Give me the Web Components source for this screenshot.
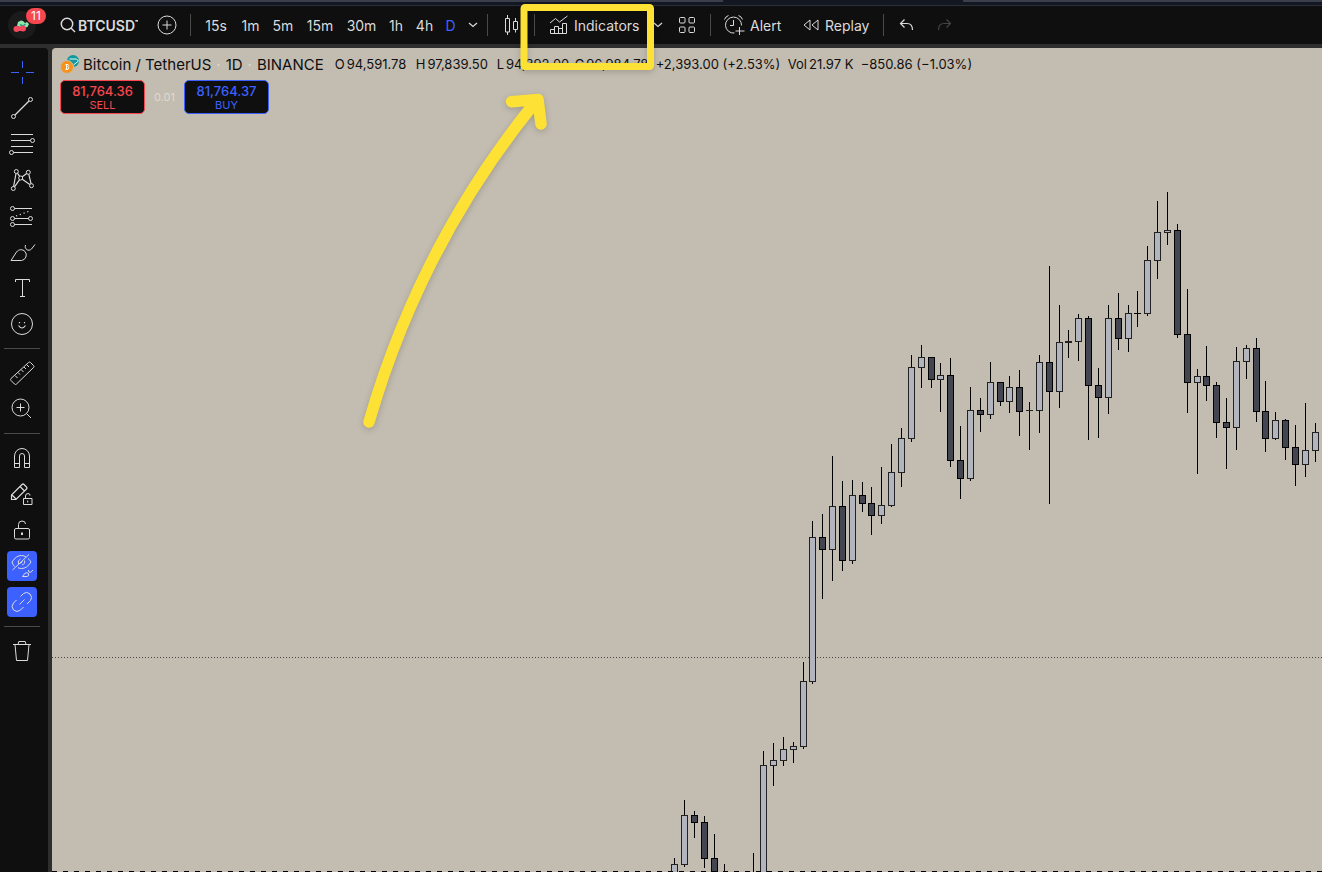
<!DOCTYPE html>
<html lang="en">
<head>
<meta charset="utf-8">
<title>BTCUSDT chart</title>
<style>
  html, body { margin: 0; height: 100%; background: #2e2e2e; }
  body { font-family: Inter, "Liberation Sans", sans-serif; font-size: 14px; color: #dbdbdb; overflow: hidden; }
</style>
</head>
<body>
<trading-app></trading-app>

<script>
const ICONS = {
  search: [16, 16, '<circle cx="7" cy="7" r="5.7" stroke-width="1.5"/><path d="M11 11l4 4" stroke-width="1.5"/>'],
  plus: [20, 20, '<circle cx="10" cy="10" r="9"/><path d="M10 5.5v9M5.5 10h9"/>'],
  chevron: [10, 6, '<path d="M1 1l4 3.500 4-3.500" stroke-width="1.200"/>'],
  candles: [16, 22, '<path d="M4.500 1v3M4.500 18v3M2.500 4.500h4v13.500h-4zM12.500 4v3.500M12.500 15.500v3M10.500 7.500h4v8h-4z"/>'],
  indicators: [20, 20, '<path d="M1.500 18.500v-4h4v4zM5.500 18.500v-7h4v7M9.500 18.500v-5h4v5M13.500 18.500V8.500h4v10zM5 18.500h10M1 8l5.500-4.500 4 3.500L18.500 1"/>'],
  layout: [18, 18, '<rect x="1.500" y="1.500" width="5.500" height="5.500" rx="1"/><rect x="11" y="1.500" width="5.500" height="5.500" rx="1"/><rect x="1.500" y="11" width="5.500" height="5.500" rx="1"/><rect x="11" y="11" width="5.500" height="5.500" rx="1"/>'],
  alarm: [22, 22, '<path d="M18.500 11.500a8 8 0 1 0-7 7.500M10.500 6v5.500H7M1.500 5.500Q2.500 2.500 5.500 1.500M15.500 1.500Q18.500 2.500 19.500 5.500M16.500 13v8M12.500 17h9"/>'],
  replay: [18, 14, '<path d="M8 2v10L2 7zM16 2v10L10 7z"/>'],
  undo: [16, 14, '<path d="M6.500 1.500L2.500 5.500l4 4M2.500 5.500H9q5.500 0 5.500 6.500" stroke-width="1.200"/>'],
  redo: [16, 14, '<path d="M10.500 1.500l4 4-4 4M14.500 5.500H8q-5.500 0-5.500 6.500" stroke-width="1.200"/>'],
  cross: [28, 28, '<path d="M14.500 3v7M14.500 19v7M3 14.500h8M18 14.500h8"/>'],
  trend: [28, 28, '<circle cx="5.500" cy="22.500" r="2"/><circle cx="22.500" cy="5.500" r="2"/><path d="M7 21L21 7" stroke-width="1.200"/>'],
  fib: [28, 28, '<path d="M3 4.500h22M3 10.500h19.500M3 16.500h22M5.500 22.500H25"/><circle cx="24.500" cy="10.500" r="2"/><circle cx="3.500" cy="22.500" r="2"/>'],
  pattern: [28, 28, '<circle cx="5.300" cy="22.500" r="2"/><circle cx="8.300" cy="5.500" r="2"/><circle cx="12.700" cy="12" r="2"/><circle cx="20.300" cy="6.300" r="2"/><circle cx="23.500" cy="19.700" r="2"/><path d="M5.600 20.500L8 7.500M9.400 7.100l2.200 3.300M14.300 10.800l4.400-3.300M20.800 8.300l2.300 9.500M14.300 13.200l7.500 5.400M11.600 13.700L6.500 20.900" stroke-width="1.200"/>'],
  position: [28, 28, '<circle cx="4.500" cy="6.500" r="2"/><path d="M6.500 6.500H24"/><circle cx="4.500" cy="16.500" r="2"/><path d="M6.500 16.500h14"/><circle cx="22.500" cy="16.500" r="2"/><circle cx="4.500" cy="22.500" r="2"/><path d="M6.500 22.500H24"/><path d="M8 14l15-5.500" stroke-width="1.200" stroke-dasharray="1.200 2.800"/>'],
  brush: [28, 28, '<path d="M3 22.500h10.500a5.500 5.500 0 0 0 3.500-9c-2.500-2.500-6-2.500-8.500.5zM17.500 7c-1.500 4 3 7 6 4L27 6.500"/>'],
  text: [28, 28, '<path d="M7.500 8V5.500h14V8M14.500 5.500v17M12 22.500h5"/>'],
  smile: [28, 28, '<circle cx="14" cy="14" r="10.500"/><path d="M10.500 15.500q3.500 5 7 0M11.500 12v1.300M16.500 12v1.300" stroke-width="1.200"/>'],
  ruler: [28, 28, '<path d="M20.500 3.500q1-1 2 0l3 3q1 1 0 2l-17 16.500q-1 1-2 0l-3.500-3.500q-1-1 0-2zM7 16.500l2.500 2.500M10 13.500l2 2M13 10.500l2.500 2.500M16 8l2 2M18.500 5.500L21 8"/>'],
  zoom: [28, 28, '<circle cx="12.500" cy="12.500" r="8.500"/><path d="M18.500 18.500l4.500 4.500M12.500 8.500v8M8.500 12.500h8"/>'],
  magnet: [28, 28, '<path d="M6.500 23.500V12a7.500 7.500 0 0 1 15 0v11.500h-5V12a2.500 2.500 0 0 0-5 0v11.500zM6.500 19.500h5M16.500 19.500h5"/>'],
  pencil: [28, 28, '<path d="M3.500 19.500v-4.500L14 4.500q1-1 2 0l2.500 2.500q1 1 0 2L8 19.500zM12 6.500l4.500 4.500M4 15l4 4" stroke-width="1.200"/><path d="M15.500 18.500h8.500v6h-8.500zM17.500 18v-2q0-2.500 2.500-2.500 2 0 2 2M19.700 20.500v2"/>'],
  lock: [28, 28, '<rect x="6.500" y="12.500" width="15" height="10.500" rx="1.500"/><path d="M10.500 12.500V8.500q0-3.500 3.500-3.500t3.500 3"/><path d="M14 16.500v2.500" stroke-width="2"/>'],
  eye: [30, 30, '<path d="M7.500 15.500Q6 14 5 11q4-6.500 9.500-6.500 2.500 0 4.500 1.500M21 7.500q2 1.500 3 3.500-4 6.500-9.500 6.500-2 0-3.500-.8M5.500 19L22 3.500M11.500 13q-1.500-3.500 2-5M17.500 9.500q1 3.500-2.500 4.500M13.500 12.500l2-2M15.500 25.500h4.500q2.500-.5 1.500-3-1.500-1.500-3.500-.3zM21.500 19q-.3 3 2.200 2.300L26 19"/>'],
  link: [30, 30, '<path d="M12.500 17.500l5-5M13.500 9.500l3-3q3-2.500 6.500.5 3 3.500.5 6.500l-3.500 3.500M9.500 13l-3 3q-3 3.500 0 7 3.500 3 7 0l3-3"/>'],
  trash: [28, 28, '<path d="M5 7.500h18M10 7.500l.8-3h6.400l.8 3M7 7.500l1.500 16h11L21 7.500"/>']
};

class UiIcon extends HTMLElement {
  connectedCallback() {
    const [w, h, body] = ICONS[this.getAttribute('name')];
    this.attachShadow({ mode: 'open' }).innerHTML = `
      <style>
        :host { display: block; flex: none; }
        svg { display: block; fill: none; stroke: currentColor; stroke-width: 1; }
      </style>
      <svg width="${w}" height="${h}" viewBox="0 0 ${w} ${h}" aria-hidden="true">${body}</svg>`;
  }
}
customElements.define('ui-icon', UiIcon);

class BarSeparator extends HTMLElement {
  connectedCallback() {
    this.attachShadow({ mode: 'open' }).innerHTML = `
      <style>:host { display: block; flex: none; width: 1px; height: 22px; background: #4a4a4a; }</style>`;
  }
}
customElements.define('bar-separator', BarSeparator);

class TopBar extends HTMLElement {
  connectedCallback() {
    this.attachShadow({ mode: 'open' }).innerHTML = `
      <style>
        :host { display: flex; align-items: center; height: 38px; background: #0f0f0f; border-top: 1px solid #2c2f3b; }
        button { font: inherit; color: inherit; background: none; border: 0; padding: 0; margin: 0; height: 38px; box-sizing: border-box;
                 display: flex; align-items: center; justify-content: center; flex: none; white-space: nowrap; }
        .user { position: relative; width: 56px; justify-content: flex-start; padding-left: 8px; }
        .badge { position: absolute; left: 26px; top: 2px; width: 20px; height: 16px; border-radius: 8px;
                 background: #f7474f; color: #fff; font-size: 12px; line-height: 16px; text-align: center; }
        .symbol { width: 92px; gap: 2px; justify-content: flex-start; padding-left: 4px; font-weight: 600; }
        .symbol span { width: 60px; overflow: hidden; text-align: left; }
        .compare { width: 38px; margin-right: 4px; }
        .intervals { display: grid; grid-template-columns: 24px 21px 20px 30px 29px 16px 17px 11px 10px; column-gap: 12px; margin: 0 9px 0 13px; }
        .intervals .on { color: #3d61ff; }
        .type { width: 46px; }
        .label { gap: 5px; justify-content: flex-start; padding-left: 12px; }
        .ind { width: 118px; padding-left: 14px; }
        .layout { width: 47px; }
        .alert { width: 79px; }
        .replay { width: 93px; }
        .undo { width: 44px; }
        .redo { width: 32px; color: #444; }
      </style>
      <button class="user" aria-label="Account">
        <svg width="28" height="30" viewBox="0 0 28 30" aria-hidden="true">
          <circle cx="14" cy="15" r="14" fill="#1b1b1b"/>
          <path d="M9 16l1-4 3-1.500 2 .5 2 2 2-1 2 2-1.500 3-4 1z" fill="#8fe8ab"/>
          <path d="M12 14.500l3 1.500 2.500-2" stroke="#2d9c8b" stroke-width="1.500" fill="none"/>
          <circle cx="8.500" cy="19" r="3" fill="#f2495c"/><circle cx="15" cy="18.500" r="3" fill="#f2495c"/><path d="M9 16.500h3l3 .5v4H9z" fill="#f2495c"/>
        </svg>
        <span class="badge">11</span>
      </button>
      <button class="symbol"><ui-icon name="search"></ui-icon><span>BTCUSDT</span></button>
      <button class="compare" aria-label="Compare"><ui-icon name="plus"></ui-icon></button>
      <bar-separator></bar-separator>
      <div class="intervals">
        <button>15s</button><button>1m</button><button>5m</button><button>15m</button><button>30m</button>
        <button>1h</button><button>4h</button><button class="on">D</button>
        <button aria-label="More intervals"><ui-icon name="chevron"></ui-icon></button>
      </div>
      <bar-separator></bar-separator>
      <button class="type" aria-label="Chart type"><ui-icon name="candles"></ui-icon></button>
      <bar-separator></bar-separator>
      <button class="label ind"><ui-icon name="indicators"></ui-icon>Indicators</button>
      <button aria-label="Templates"><ui-icon name="chevron"></ui-icon></button>
      <button class="layout" aria-label="Layout"><ui-icon name="layout"></ui-icon></button>
      <bar-separator></bar-separator>
      <button class="label alert"><ui-icon name="alarm"></ui-icon>Alert</button>
      <button class="label replay"><ui-icon name="replay"></ui-icon>Replay</button>
      <bar-separator></bar-separator>
      <button class="undo" aria-label="Undo"><ui-icon name="undo"></ui-icon></button>
      <button class="redo" aria-label="Redo"><ui-icon name="redo"></ui-icon></button>`;
  }
}
customElements.define('top-bar', TopBar);

class ToolRail extends HTMLElement {
  connectedCallback() {
    const btn = (name, label, cls = '') =>
      `<button class="${cls}" aria-label="${label}"><ui-icon name="${name}"></ui-icon></button>`;
    this.attachShadow({ mode: 'open' }).innerHTML = `
      <style>
        :host { display: flex; flex-direction: column; background: #0f0f0f; border-top-right-radius: 4px; padding: 9px 4px 0 7px; gap: 6px; }
        button { width: 30px; height: 30px; padding: 0; border: 0; border-radius: 4px; background: none; color: #dbdbdb;
                 display: flex; align-items: center; justify-content: center; }
        .cross { color: #3d61ff; }
        .on { background: #3d61ff; }
        hr { border: 0; height: 1px; background: #4a4a4a; width: 36px; margin: 3px 0 3px -3px; }
      </style>
      ${btn('cross', 'Cross', 'cross')}${btn('trend', 'Trend line')}${btn('fib', 'Fib retracement')}
      ${btn('pattern', 'Patterns')}${btn('position', 'Long position')}${btn('brush', 'Brush')}
      ${btn('text', 'Text')}${btn('smile', 'Icons')}<hr>
      ${btn('ruler', 'Measure')}${btn('zoom', 'Zoom in')}<hr>
      ${btn('magnet', 'Magnet')}${btn('pencil', 'Keep drawing')}${btn('lock', 'Lock drawings')}
      ${btn('eye', 'Hide drawings', 'on')}${btn('link', 'Sync drawings', 'on')}<hr>
      ${btn('trash', 'Remove')}`;
  }
}
customElements.define('tool-rail', ToolRail);

/* x, high, body top, body bottom, low, rising */
const CANDLES = [
  [674,858,864,880,880,1],[684,800,815,865,867,1],[694,811,815,823,838,0],[704,816,822,859,868,0],
  [714,834,858,880,880,0],[724,864,876,880,880,0],[753,853,876,880,880,1],[763,751,765,880,880,1],
  [773,743,760,766,786,1],[783,737,749,761,766,1],[793,742,746,750,763,1],[803,662,681,747,749,1],
  [812,521,537,682,684,1],[822,514,537,550,599,0],[832,456,506,550,581,1],[842,481,506,561,571,0],
  [852,480,495,561,564,1],[862,482,495,504,512,0],[871,487,503,516,535,0],[881,467,505,516,524,1],
  [891,444,472,506,507,1],[901,428,438,473,487,1],[911,355,367,439,442,1],[921,345,357,368,388,1],
  [931,357,357,380,388,0],[940,363,375,380,412,1],[950,358,375,461,467,0],[960,426,460,479,499,0],
  [970,387,410,479,481,1],[980,398,410,415,432,0],[990,362,382,415,419,1],[1000,382,382,402,406,0],
  [1009,376,387,402,413,1],[1019,370,387,412,436,0],[1029,402,410,411,450,1],[1039,355,362,411,433,1],
  [1049,266,362,392,504,0],[1059,305,342,392,408,1],[1068,330,341,343,358,1],[1078,314,318,342,361,1],
  [1088,316,318,386,440,0],[1098,368,385,398,438,0],[1108,305,318,398,414,1],[1118,293,318,339,350,0],
  [1128,305,313,339,352,1],[1137,291,313,314,327,0],[1147,246,260,314,316,1],[1157,201,232,261,279,1],
  [1167,192,230,233,245,1],[1177,224,230,335,338,0],[1187,289,334,383,413,0],[1197,369,376,383,474,1],
  [1206,346,376,386,401,0],[1216,382,385,423,438,0],[1226,398,422,428,469,0],[1236,347,361,428,450,1],
  [1246,345,348,362,379,1],[1256,338,348,412,422,0],[1265,381,411,439,452,0],[1275,412,420,439,440,1],
  [1285,419,420,448,460,0],[1295,425,447,465,486,0],[1305,403,450,465,477,1],[1315,423,432,451,462,1]
];

class CandleChart extends HTMLElement {
  connectedCallback() {
    const bars = CANDLES.map(([x, hi, top, bot, lo, up]) => {
      const edge = up ? '#222' : '#000';
      const h = bot - top;
      const inner = h > 2 ? `<rect x="${x - 2}" y="${top + 1}" width="5" height="${h - 2}" fill="${up ? '#b2b5be' : '#434651'}"/>` : '';
      return `<rect x="${x}" y="${hi}" width="1" height="${lo - hi}"/><rect x="${x - 3}" y="${top}" width="7" height="${h}" fill="${edge}"/>${inner}`;
    }).join('');
    this.attachShadow({ mode: 'open' }).innerHTML = `
      <style>
        :host { display: block; overflow: hidden; }
        svg { display: block; width: 100%; height: 100%; }
      </style>
      <svg role="img" aria-label="BTCUSDT daily candles" shape-rendering="crispEdges">
        <g transform="translate(-52 -48)">
          <path d="M52 657.500H2600" stroke="#444" stroke-dasharray="1 2"/>
          ${bars}
          <path d="M52 871.500H2600" stroke="#000" stroke-dasharray="5 6"/>
        </g>
      </svg>`;
  }
}
customElements.define('candle-chart', CandleChart);

class ChartLegend extends HTMLElement {
  connectedCallback() {
    this.attachShadow({ mode: 'open' }).innerHTML = `
      <style>
        :host { display: block; color: #0f0f0f; padding: 6px 0 0 8px; }
        .row { display: flex; align-items: center; height: 20px; white-space: nowrap; }
        h1 { font-size: 15px; font-weight: 400; margin: 0 11px 0 3px; display: flex; gap: 5px; }
        i { font-style: normal; color: #dedad2; }
        .vals { display: grid; grid-template-columns: 81px 81px 78px 81px 132px 73px auto; font-size: 13px; }
        .vals b { font-weight: 400; margin-right: 2px; }
        .trade { display: flex; align-items: center; margin-top: 6px; }
        button { font: inherit; font-size: 13px; font-weight: 500; width: 85px; height: 34px; padding: 1px 0 0; border: 1px solid; border-radius: 5px;
                 background: #0f0f0f; line-height: 14px; }
        small { display: block; font-size: 11px; font-weight: 400; }
        .sell { color: #f7474f; } .buy { color: #3d61ff; }
        .spread { width: 39px; text-align: center; font-size: 11px; color: #dedad2; }
      </style>
      <div class="row">
        <svg width="20" height="20" viewBox="0 0 20 20" aria-hidden="true">
          <circle cx="13" cy="7" r="6" fill="#12989a"/><path d="M9.500 5h7l2 2-5 4" fill="none" stroke="#e8ffff"/>
          <circle cx="7" cy="13" r="6.500" fill="#f7931a" stroke="#c3bcb0"/><path d="M5.500 10.500h2.500q1.500 1-.3 2.300 2 .7.300 2.500H5.500M6.500 10v6" fill="none" stroke="#fff"/>
        </svg>
        <h1>Bitcoin / TetherUS <i>·</i> 1D <i>·</i> BINANCE</h1>
        <div class="vals"><span><b>O</b>94,591.78</span><span><b>H</b>97,839.50</span><span><b>L</b>94,392.00</span><span><b>C</b>96,984.78</span><span>+2,393.00 (+2.53%)</span><span><b>Vol</b>21.97 K</span><span>−850.86 (−1.03%)</span></div>
      </div>
      <div class="trade">
        <button class="sell">81,764.36<small>SELL</small></button>
        <span class="spread">0.01</span>
        <button class="buy">81,764.37<small>BUY</small></button>
      </div>`;
  }
}
customElements.define('chart-legend', ChartLegend);

/* Hand-drawn callout laid over the chart and the toolbar */
class CalloutMark extends HTMLElement {
  connectedCallback() {
    this.attachShadow({ mode: 'open' }).innerHTML = `
      <style>
        :host { position: absolute; left: 350px; top: 0; pointer-events: none; }
        svg { display: block; filter: drop-shadow(0 2px 3px rgba(0,0,0,.18)); }
      </style>
      <svg width="320" height="440" viewBox="350 0 320 440" fill="none" stroke="#fde235" aria-hidden="true">
        <rect x="524" y="7.500" width="126.500" height="59" rx="1" stroke-width="7"/>
        <path d="M369 422Q421 242 537 100M511.500 101.700L538 99.500L541 124" stroke-width="11.500" stroke-linecap="round" stroke-linejoin="round"/>
      </svg>`;
  }
}
customElements.define('callout-mark', CalloutMark);

class TradingApp extends HTMLElement {
  connectedCallback() {
    this.attachShadow({ mode: 'open' }).innerHTML = `
      <style>
        :host { display: grid; grid-template: auto auto minmax(0, 1fr) / 48px minmax(0, 1fr); column-gap: 4px; height: 100vh; position: relative; }
        .tabs { grid-column: 1 / -1; height: 5px; background: #131722; display: flex; justify-content: space-between; }
        .tabs b { height: 2px; background: #3b3e4b; }
        .tabs b:first-child { flex: 723; } .tabs s { flex: 240; } .tabs b:last-child { flex: 359; }
        top-bar { grid-column: 1 / -1; margin-bottom: 4px; }
        main { display: grid; background: #c3bcb0; border-top-left-radius: 4px; overflow: hidden; }
        main > * { grid-area: 1 / 1; min-width: 0; min-height: 0; }
      </style>
      <div class="tabs"><b></b><s></s><b></b></div>
      <top-bar></top-bar>
      <tool-rail></tool-rail>
      <main><candle-chart></candle-chart><chart-legend></chart-legend></main>
      <callout-mark></callout-mark>`;
  }
}
customElements.define('trading-app', TradingApp);
</script>
</body>
</html>
